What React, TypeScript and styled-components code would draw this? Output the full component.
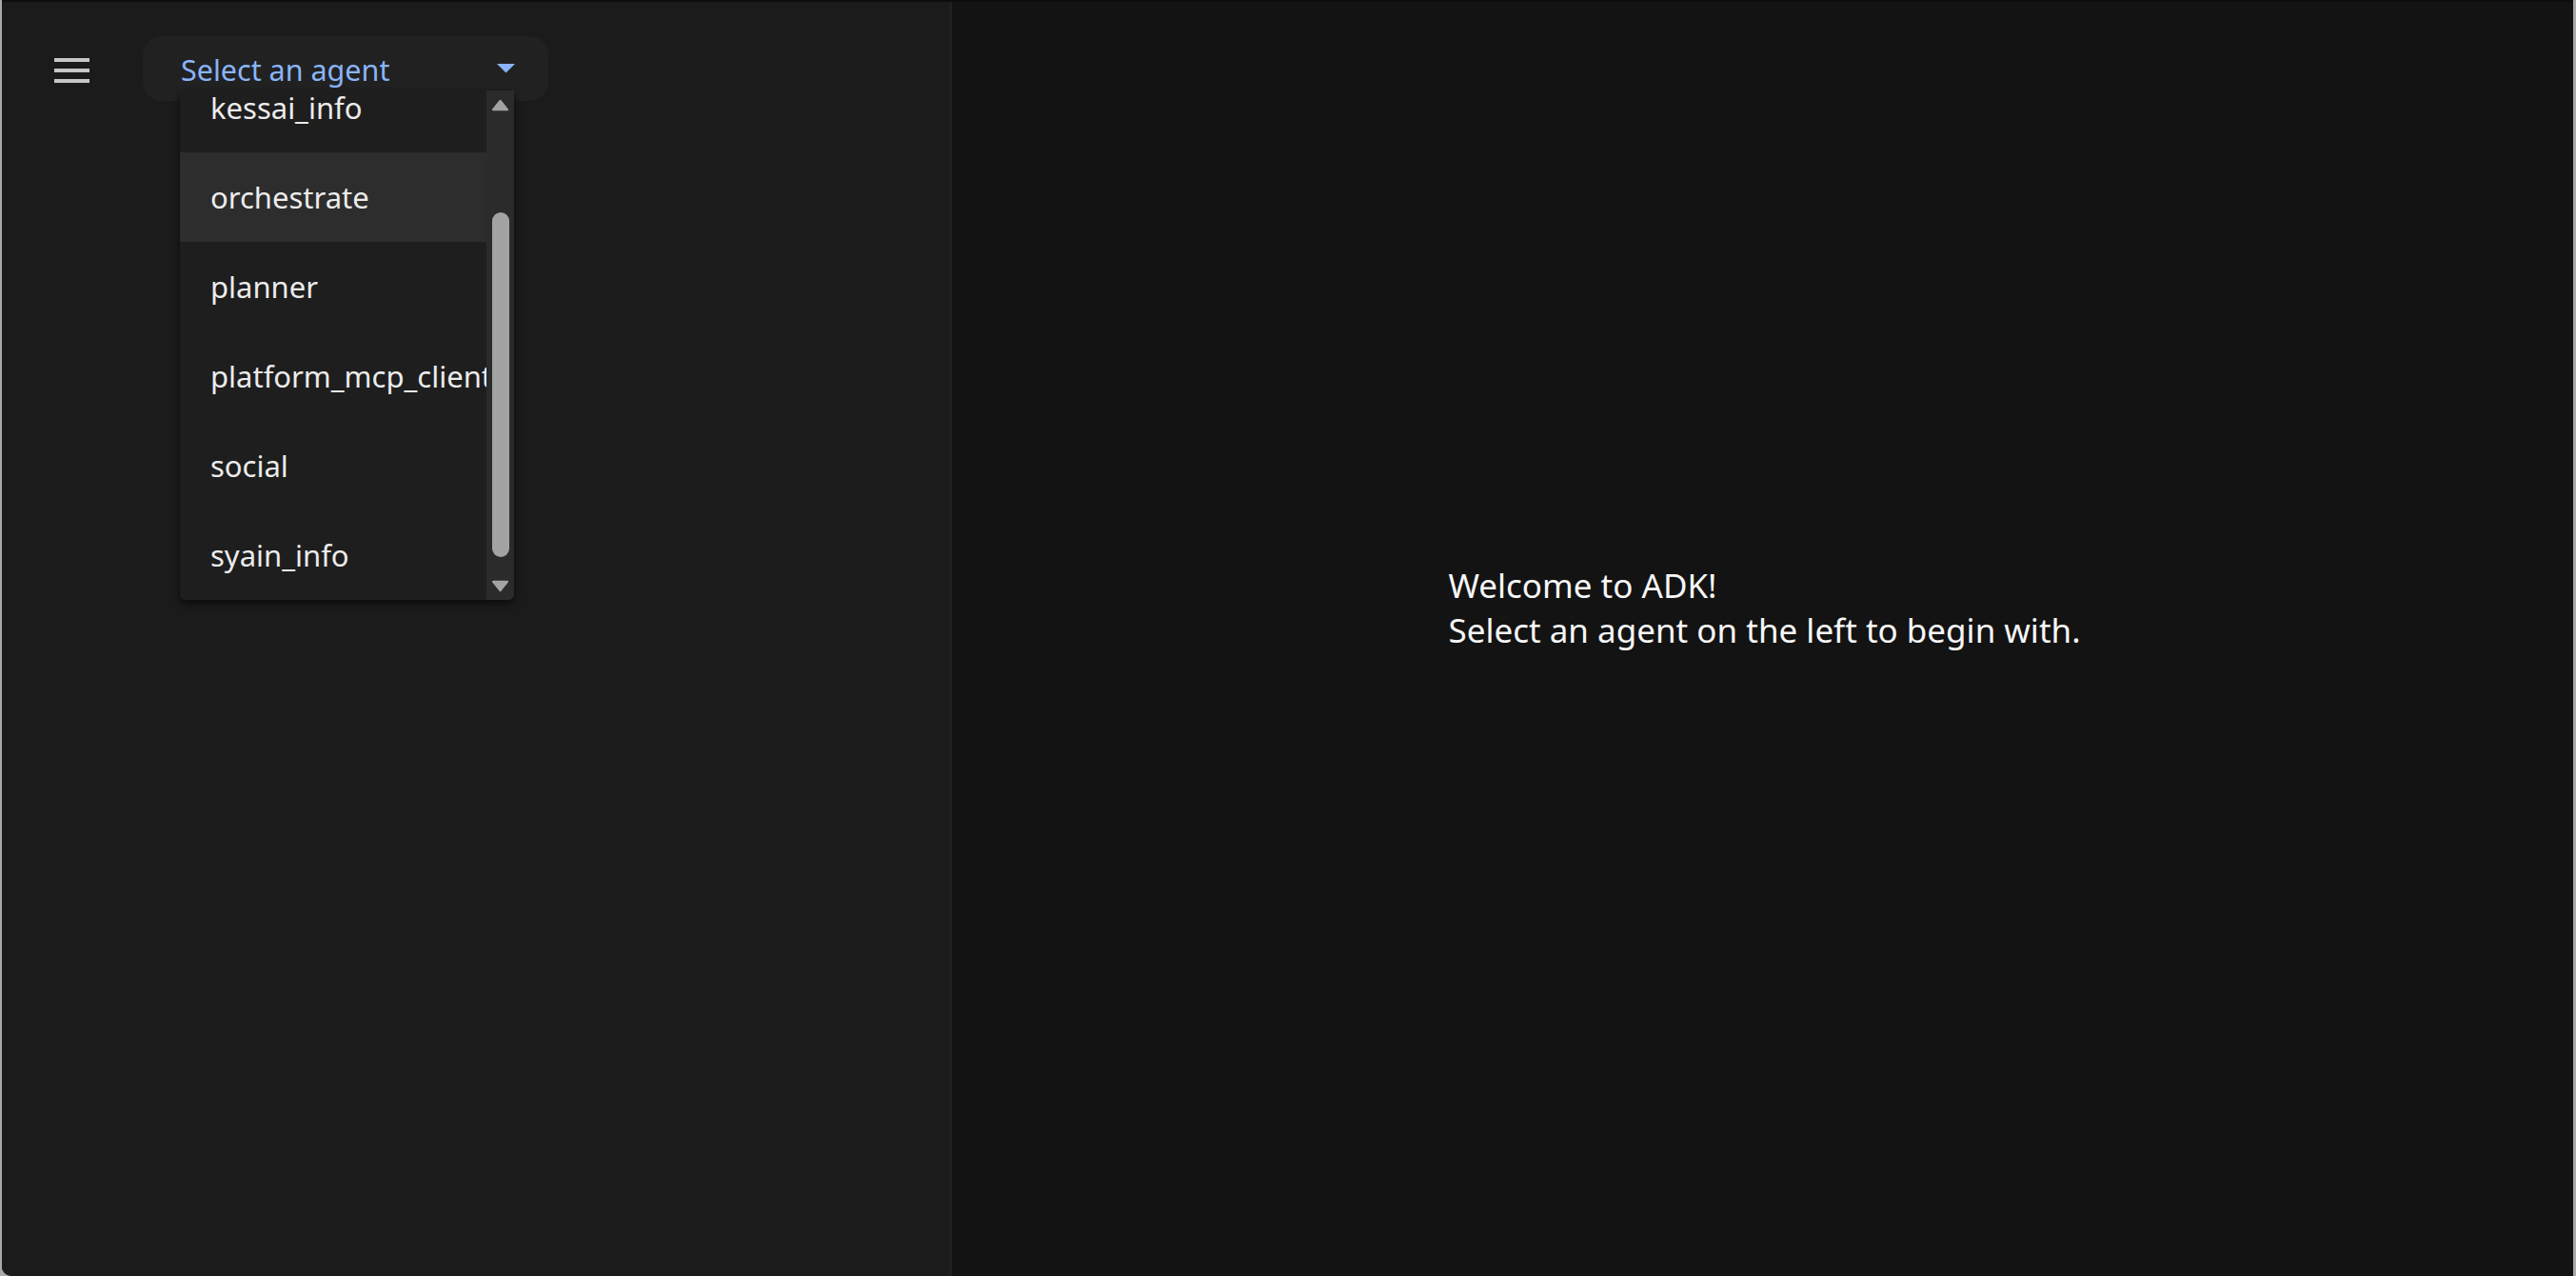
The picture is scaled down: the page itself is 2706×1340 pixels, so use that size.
import React, { useLayoutEffect, useRef } from "react";
import styled, { createGlobalStyle } from "styled-components";

const GlobalStyle = createGlobalStyle`
  html, body {
    margin: 0;
    padding: 0;
    height: 100%;
    background: #a9a9a9;
    font-family: "Noto Sans", "Open Sans", sans-serif;
  }
  #root { height: 100%; }
`;

const Frame = styled.div`
  display: flex;
  height: 1340px;
  padding: 0 3px 0 2px;
  box-sizing: border-box;
  background: #a9a9a9;
`;

const Window = styled.div`
  flex: 1;
  display: flex;
  border-top: 2px solid #0e0e0e;
  border-bottom-left-radius: 10px;
  overflow: hidden;
  background: #131313;
`;

const Sidebar = styled.aside`
  width: 995px;
  flex: none;
  background: #1b1b1b;
  border-right: 3px solid #202020;
  display: flex;
  flex-direction: column;
`;

const Toolbar = styled.div`
  display: flex;
  align-items: center;
  gap: 50px;
  padding: 36px 0 0 48px;
`;

const MenuButton = styled.button`
  width: 50px;
  height: 50px;
  padding: 0;
  border: none;
  background: transparent;
  display: flex;
  align-items: center;
  justify-content: center;
  margin-top: 4px;
  color: #c4c7c5;
`;

const SelectWrap = styled.div`
  position: relative;
  width: 426px;
`;

const SelectTrigger = styled.div`
  height: 68px;
  box-sizing: border-box;
  border-radius: 20px;
  background: #212121;
  padding: 0 35px 0 40px;
  display: flex;
  align-items: center;
  justify-content: space-between;
`;

const SelectLabel = styled.span`
  font-size: 30.5px;
  color: #8ab4f8;
  line-height: 1;
  margin-top: 2px;
`;

const CaretBox = styled.span`
  display: flex;
  color: #8ab4f8;
`;

const Panel = styled.div`
  position: absolute;
  top: 57px;
  left: 39px;
  width: 351px;
  height: 535px;
  display: flex;
  background: #1e1e1e;
  border-radius: 0 0 6px 6px;
  box-shadow: 0 5px 8px rgba(0, 0, 0, 0.35), 0 2px 4px rgba(0, 0, 0, 0.3);
  overflow: hidden;
  z-index: 5;
`;

const OptionList = styled.ul`
  flex: 1;
  margin: 0;
  padding: 0;
  list-style: none;
  overflow: hidden;
`;

const Option = styled.li<{ $active?: boolean }>`
  height: 94px;
  display: flex;
  align-items: center;
  padding-left: 32px;
  font-size: 31px;
  color: #ececec;
  white-space: nowrap;
  overflow: hidden;
  background: ${(p) => (p.$active ? "#2d2d2d" : "transparent")};
`;

const ScrollBar = styled.div`
  width: 29px;
  flex: none;
  background: #2b2b2b;
  display: flex;
  flex-direction: column;
  align-items: center;
`;

const ScrollArrow = styled.div<{ $up?: boolean }>`
  height: 28px;
  width: 100%;
  display: flex;
  align-items: center;
  justify-content: center;
  padding-top: ${(p) => (p.$up ? "2px" : "0")};
  padding-bottom: ${(p) => (p.$up ? "0" : "2px")};
  box-sizing: border-box;
  color: #a3a3a3;
`;

const ScrollTrack = styled.div`
  flex: 1;
  width: 100%;
  display: flex;
  justify-content: center;
`;

const ScrollThumb = styled.div`
  width: 18px;
  border-radius: 9px;
  background: #a3a3a3;
`;

const Main = styled.main`
  flex: 1;
  display: flex;
  align-items: center;
  justify-content: center;
  padding-bottom: 66px;
  padding-left: 4px;
`;

const Welcome = styled.div`
  font-size: 35px;
  line-height: 47px;
  color: #f7f7f7;
`;

const MenuIcon = () => (
  <svg width="37" height="26" viewBox="0 0 37 26" fill="currentColor">
    <rect x="0" y="0" width="37" height="4" />
    <rect x="0" y="11" width="37" height="4" />
    <rect x="0" y="22" width="37" height="4" />
  </svg>
);

const Caret = () => (
  <svg width="19" height="9.5" viewBox="0 0 20 10" fill="currentColor">
    <path d="M0 0 L20 0 L10 10 Z" />
  </svg>
);

const ArrowGlyph = ({ up }: { up?: boolean }) => (
  <svg width="19" height="13" viewBox="0 0 20 14" fill="currentColor">
    {up ? (
      <path d="M10 2 L18 12 L2 12 Z" stroke="currentColor" strokeWidth="2.5" strokeLinejoin="round" />
    ) : (
      <path d="M2 2 L18 2 L10 12 Z" stroke="currentColor" strokeWidth="2.5" strokeLinejoin="round" />
    )}
  </svg>
);

const agents = ["kessai_info", "orchestrate", "planner", "platform_mcp_client", "social", "syain_info"];

export default function App() {
  const listRef = useRef<HTMLUListElement>(null);
  useLayoutEffect(() => {
    if (listRef.current) listRef.current.scrollTop = 29;
  }, []);

  return (
    <>
      <GlobalStyle />
      <Frame>
        <Window>
          <Sidebar>
            <Toolbar>
              <MenuButton aria-label="menu">
                <MenuIcon />
              </MenuButton>
              <SelectWrap>
                <SelectTrigger>
                  <SelectLabel>Select an agent</SelectLabel>
                  <CaretBox>
                    <Caret />
                  </CaretBox>
                </SelectTrigger>
                <Panel>
                  <OptionList ref={listRef}>
                    {agents.map((a) => (
                      <Option key={a} $active={a === "orchestrate"}>
                        {a}
                      </Option>
                    ))}
                  </OptionList>
                  <ScrollBar>
                    <ScrollArrow $up>
                      <ArrowGlyph up />
                    </ScrollArrow>
                    <ScrollTrack>
                      <ScrollThumb style={{ marginTop: 100, height: 362 }} />
                    </ScrollTrack>
                    <ScrollArrow>
                      <ArrowGlyph />
                    </ScrollArrow>
                  </ScrollBar>
                </Panel>
              </SelectWrap>
            </Toolbar>
          </Sidebar>
          <Main>
            <Welcome>
              Welcome to ADK!
              <br />
              Select an agent on the left to begin with.
            </Welcome>
          </Main>
        </Window>
      </Frame>
    </>
  );
}
